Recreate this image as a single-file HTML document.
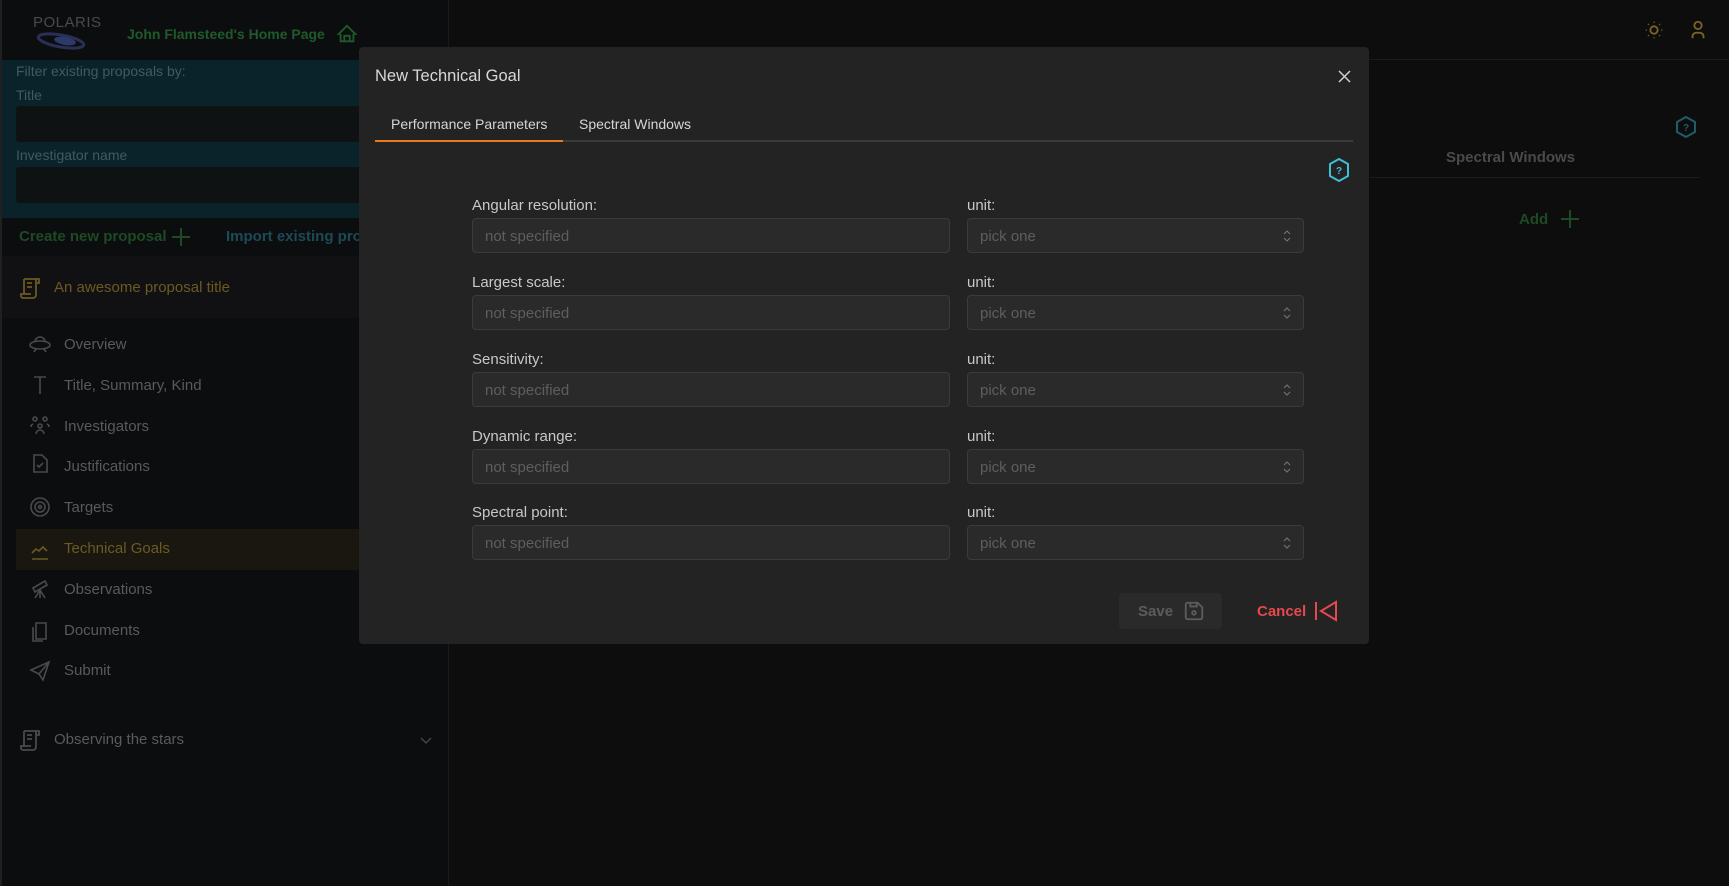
<!DOCTYPE html>
<html><head><meta charset="utf-8"><style>
*{box-sizing:border-box;margin:0;padding:0}
body{width:1729px;height:886px;background:#0d0d0e;font-family:"Liberation Sans",sans-serif;position:relative;overflow:hidden;color:#555}
.abs{position:absolute}
.side{left:0;top:0;width:449px;height:886px;background:#0c0d0f;border-right:1px solid #1a1a1a;border-left:2px solid #202020}
.hdrline{left:449px;top:59px;width:1280px;height:1px;background:#1c1c1c}
.nav{left:64px;font-size:15px;color:#5a5a5a}
.modal{left:359px;top:47px;width:1010px;height:597px;background:#232323;border-radius:4px}
.lbl{font-size:15px;color:#c8c8c8}
.inp{width:478px;height:35px;background:#2a2a2a;border:1px solid #3b3b3b;border-radius:4px;font-size:15px;color:#5e5e5e;padding:9px 12px}
.sel{width:337px;height:35px;background:#2a2a2a;border:1px solid #3b3b3b;border-radius:4px;font-size:15px;color:#5e5e5e;padding:9px 12px}
.sel svg{position:absolute;right:12px;top:10px}
</style></head><body>
<div class="abs side"></div>
<!-- header -->
<div class="abs" style="left:33px;top:14px;font-size:15px;color:#4a4a4a;letter-spacing:0.5px">POLARIS</div>
<svg class="abs" style="left:33px;top:31px" width="58" height="22"><ellipse cx="28" cy="10" rx="23" ry="6" fill="none" stroke="#2a2f55" stroke-width="3" transform="rotate(10 28 10)"/><ellipse cx="32" cy="10" rx="11" ry="4" fill="#2c3a6a" transform="rotate(10 32 10)"/></svg>
<div class="abs" style="left:127px;top:26px;font-size:14px;font-weight:bold;color:#1f5a2a">John Flamsteed's Home Page</div>
<svg class="abs" style="left:336px;top:23px" width="22" height="22" viewBox="0 0 24 24" fill="none" stroke="#1f5a2a" stroke-width="2"><path d="M5 12H3l9-9 9 9h-2M5 12v8h14v-8M9 20v-6h6v6"/></svg>
<svg class="abs" style="left:1643px;top:19px" width="22" height="22" viewBox="0 0 24 24" fill="none" stroke="#7a6425" stroke-width="2"><circle cx="12" cy="12" r="4"/><path d="M12 3v1M12 20v1M3 12h1M20 12h1M5.6 5.6l.7.7M17.7 17.7l.7.7M5.6 18.4l.7-.7M17.7 6.3l.7-.7"/></svg>
<svg class="abs" style="left:1687px;top:18px" width="22" height="24" viewBox="0 0 24 24" fill="none" stroke="#7a6425" stroke-width="2"><circle cx="12" cy="7" r="4"/><path d="M6 21v-2a4 4 0 0 1 4-4h4a4 4 0 0 1 4 4v2"/></svg>
<div class="abs hdrline"></div>
<!-- filter -->
<div class="abs" style="left:2px;top:60px;width:447px;height:158px;background:#0a232a"></div>
<div class="abs" style="left:16px;top:63px;font-size:14px;color:#3f5a60">Filter existing proposals by:</div>
<div class="abs" style="left:16px;top:87px;font-size:14px;color:#3f5a60">Title</div>
<div class="abs" style="left:16px;top:106px;width:433px;height:36px;background:#0f1213;border-radius:3px"></div>
<div class="abs" style="left:16px;top:147px;font-size:14px;color:#3f5a60">Investigator name</div>
<div class="abs" style="left:16px;top:167px;width:433px;height:36px;background:#0f1213;border-radius:3px"></div>
<div class="abs" style="left:19px;top:228px;font-size:15px;font-weight:bold;color:#1d4a25">Create new proposal</div>
<svg class="abs" style="left:171px;top:227px" width="20" height="20"><path d="M10 1v18M1 10h18" stroke="#1d4a25" stroke-width="2"/></svg>
<div class="abs" style="left:226px;top:228px;font-size:15px;font-weight:bold;color:#1c4a55">Import existing prop</div>
<div class="abs" style="left:2px;top:256px;width:447px;height:62px;background:#111113"></div>
<svg class="abs" style="left:20px;top:277px" width="20" height="22" viewBox="0 0 20 22" fill="none" stroke="#6b5a22" stroke-width="1.8"><path d="M4 2h12v16a3 3 0 0 1-3 3H3a2 2 0 0 1-2-2v-2h10M4 2v15M7 6h5M7 10h5M16 2h3v4h-3"/></svg>
<div class="abs" style="left:54px;top:279px;font-size:15px;color:#6b5a22">An awesome proposal title</div>
<!-- nav -->
<div class="abs" style="left:16px;top:529px;width:433px;height:41px;background:#1a1710"></div>
<div class="abs nav" style="top:336px">Overview</div>
<div class="abs nav" style="top:377px">Title, Summary, Kind</div>
<div class="abs nav" style="top:418px">Investigators</div>
<div class="abs nav" style="top:458px">Justifications</div>
<div class="abs nav" style="top:499px">Targets</div>
<div class="abs nav" style="top:540px;color:#6b5a22">Technical Goals</div>
<div class="abs nav" style="top:581px">Observations</div>
<div class="abs nav" style="top:622px">Documents</div>
<div class="abs nav" style="top:662px">Submit</div>
<svg class="abs" style="left:28px;top:333px" width="24" height="360" viewBox="0 0 24 360" fill="none" stroke="#4a4a4a" stroke-width="1.6">
<ellipse cx="12" cy="12" rx="10" ry="4"/><path d="M7 9a5 5 0 0 1 10 0M8 16l-2 3M16 16l2 3"/>
<path d="M6 44h12M12 44v17"/>
<circle cx="7" cy="86" r="2"/><circle cx="17" cy="86" r="2"/><circle cx="12" cy="93" r="2"/><path d="M8 101a4 4 0 0 1 8 0M3 94a3 3 0 0 1 2-3M21 94a3 3 0 0 0-2-3"/>
<path d="M6 122h8l5 5v12H6zM9 132l2 2 4-4"/>
<circle cx="12" cy="174" r="9"/><circle cx="12" cy="174" r="5"/><circle cx="12" cy="174" r="1.5"/>
<path d="M4 226h16M4 220l4-4 3 2 4-4 4 4" stroke="#6b5a22"/>
<path d="M5 255l12-7 2 4-12 7zM12 257l-5 8M12 257l5 8M12 257v8"/>
<path d="M8 290h10v16H8zM5 294v14h10"/>
<path d="M3 337l18-8-6 18-4-6zM11 341l10-12"/>
</svg>
<svg class="abs" style="left:20px;top:729px" width="20" height="22" viewBox="0 0 20 22" fill="none" stroke="#4a4a4a" stroke-width="1.8"><path d="M4 2h12v16a3 3 0 0 1-3 3H3a2 2 0 0 1-2-2v-2h10M4 2v15M7 6h5M7 10h5M16 2h3v4h-3"/></svg>
<div class="abs" style="left:54px;top:731px;font-size:15px;color:#5a5a5a">Observing the stars</div>
<svg class="abs" style="left:420px;top:737px" width="12" height="8"><path d="M1 1l5 5 5-5" stroke="#4a4a4a" fill="none" stroke-width="1.3"/></svg>
<!-- right bg -->
<svg class="abs" style="left:1674px;top:115px" width="24" height="24" viewBox="0 0 24 24" fill="none" stroke="#1e5c6a" stroke-width="2"><path d="M12 2l9 5v10l-9 5-9-5V7z"/><text x="12" y="16" font-size="10" font-weight="bold" fill="#1e5c6a" stroke="none" text-anchor="middle" font-family="Liberation Sans">?</text></svg>
<div class="abs" style="left:1446px;top:149px;font-size:15px;font-weight:bold;color:#4a4a4a">Spectral Windows</div>
<div class="abs" style="left:1370px;top:177px;width:330px;height:1px;background:#1c1c1c"></div>
<div class="abs" style="left:1519px;top:211px;font-size:15px;font-weight:bold;color:#1d4a25">Add</div>
<svg class="abs" style="left:1560px;top:209px" width="20" height="20"><path d="M10 1v18M1 10h18" stroke="#1d4a25" stroke-width="2"/></svg>
<!-- modal -->
<div class="abs modal"></div>
<div class="abs" style="left:375px;top:67px;font-size:16.5px;color:#d8d8d8">New Technical Goal</div>
<svg class="abs" style="left:1338px;top:70px" width="13" height="13"><path d="M1 1l11 11M12 1L1 12" stroke="#cfcfcf" stroke-width="1.5"/></svg>
<div class="abs" style="left:391px;top:116px;font-size:14px;color:#d6d6d6">Performance Parameters</div>
<div class="abs" style="left:579px;top:116px;font-size:14px;color:#d6d6d6">Spectral Windows</div>
<div class="abs" style="left:375px;top:140px;width:978px;height:2px;background:#3a3a3a"></div>
<div class="abs" style="left:375px;top:140px;width:188px;height:2px;background:#e8791f"></div>
<svg class="abs" style="left:1327px;top:157px" width="24" height="26" viewBox="0 0 24 26" fill="none" stroke="#3dbfd6" stroke-width="2"><path d="M12 2l9 5v12l-9 5-9-5V7z"/><text x="12" y="17" font-size="10" font-weight="bold" fill="#3dbfd6" stroke="none" text-anchor="middle" font-family="Liberation Sans">?</text></svg>

<div class="abs lbl" style="left:472px;top:197px">Angular resolution:</div>
<div class="abs lbl" style="left:967px;top:197px">unit:</div>
<div class="abs inp" style="left:472px;top:218px">not specified</div>
<div class="abs sel" style="left:967px;top:218px">pick one<svg width="8" height="14"><path d="M1 5l3-3 3 3M1 9l3 3 3-3" stroke="#777" fill="none"/></svg></div>

<div class="abs lbl" style="left:472px;top:274px">Largest scale:</div>
<div class="abs lbl" style="left:967px;top:274px">unit:</div>
<div class="abs inp" style="left:472px;top:295px">not specified</div>
<div class="abs sel" style="left:967px;top:295px">pick one<svg width="8" height="14"><path d="M1 5l3-3 3 3M1 9l3 3 3-3" stroke="#777" fill="none"/></svg></div>

<div class="abs lbl" style="left:472px;top:351px">Sensitivity:</div>
<div class="abs lbl" style="left:967px;top:351px">unit:</div>
<div class="abs inp" style="left:472px;top:372px">not specified</div>
<div class="abs sel" style="left:967px;top:372px">pick one<svg width="8" height="14"><path d="M1 5l3-3 3 3M1 9l3 3 3-3" stroke="#777" fill="none"/></svg></div>

<div class="abs lbl" style="left:472px;top:428px">Dynamic range:</div>
<div class="abs lbl" style="left:967px;top:428px">unit:</div>
<div class="abs inp" style="left:472px;top:449px">not specified</div>
<div class="abs sel" style="left:967px;top:449px">pick one<svg width="8" height="14"><path d="M1 5l3-3 3 3M1 9l3 3 3-3" stroke="#777" fill="none"/></svg></div>

<div class="abs lbl" style="left:472px;top:504px">Spectral point:</div>
<div class="abs lbl" style="left:967px;top:504px">unit:</div>
<div class="abs inp" style="left:472px;top:525px">not specified</div>
<div class="abs sel" style="left:967px;top:525px">pick one<svg width="8" height="14"><path d="M1 5l3-3 3 3M1 9l3 3 3-3" stroke="#777" fill="none"/></svg></div>

<div class="abs" style="left:1119px;top:593px;width:103px;height:36px;background:#2a2a2a;border-radius:4px"></div>
<div class="abs" style="left:1138px;top:603px;font-size:15px;font-weight:bold;color:#5c5c5c">Save</div>
<svg class="abs" style="left:1183px;top:600px" width="22" height="22" viewBox="0 0 24 24" fill="none" stroke="#5c5c5c" stroke-width="2"><path d="M6 3h10l5 5v11a2 2 0 0 1-2 2H5a2 2 0 0 1-2-2V5a2 2 0 0 1 2-2zM8 3v4h7V3"/><circle cx="12" cy="14" r="2"/></svg>
<div class="abs" style="left:1257px;top:603px;font-size:15px;font-weight:bold;color:#e5484d">Cancel</div>
<svg class="abs" style="left:1314px;top:600px" width="24" height="22" viewBox="0 0 24 22" fill="none" stroke="#e5484d" stroke-width="2"><path d="M2 2v18M22 2L7 11l15 9z"/></svg>
</body></html>
